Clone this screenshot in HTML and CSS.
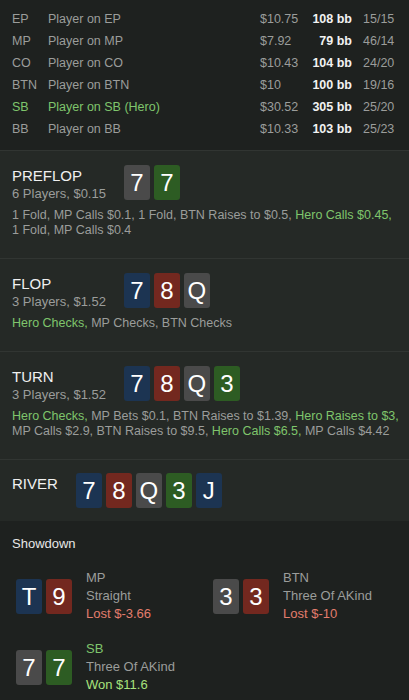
FILE: index.html
```html
<!DOCTYPE html>
<html>
<head>
<meta charset="utf-8">
<link rel="stylesheet" href="styles.css">
</head>
<body>
<div class="page">
  <div class="players">
    <div class="prow"><span class="pos">EP</span><span class="name">Player on EP</span><span class="money">$10.75</span><span class="bb">108 bb</span><span class="stats">15/15</span></div>
    <div class="prow"><span class="pos">MP</span><span class="name">Player on MP</span><span class="money">$7.92</span><span class="bb">79 bb</span><span class="stats">46/14</span></div>
    <div class="prow"><span class="pos">CO</span><span class="name">Player on CO</span><span class="money">$10.43</span><span class="bb">104 bb</span><span class="stats">24/20</span></div>
    <div class="prow"><span class="pos">BTN</span><span class="name">Player on BTN</span><span class="money">$10</span><span class="bb">100 bb</span><span class="stats">19/16</span></div>
    <div class="prow hero"><span class="pos">SB</span><span class="name">Player on SB (Hero)</span><span class="money">$30.52</span><span class="bb">305 bb</span><span class="stats">25/20</span></div>
    <div class="prow"><span class="pos">BB</span><span class="name">Player on BB</span><span class="money">$10.33</span><span class="bb">103 bb</span><span class="stats">25/23</span></div>
  </div>

  <div class="street">
    <div class="shead">
      <div class="stitle"><div class="sname">PREFLOP</div><div class="ssub">6 Players, $0.15</div></div>
      <div class="cards"><span class="card gray">7</span><span class="card green">7</span></div>
    </div>
    <div class="actions">1&nbsp;Fold, MP Calls $0.1, 1&nbsp;Fold, BTN Raises to $0.5, <span class="hero-act">Hero Calls $0.45,</span> 1&nbsp;Fold, MP Calls $0.4</div>
  </div>

  <div class="street">
    <div class="shead">
      <div class="stitle"><div class="sname">FLOP</div><div class="ssub">3 Players, $1.52</div></div>
      <div class="cards"><span class="card blue">7</span><span class="card red">8</span><span class="card gray">Q</span></div>
    </div>
    <div class="actions"><span class="hero-act">Hero Checks,</span> MP Checks, BTN Checks</div>
  </div>

  <div class="street">
    <div class="shead">
      <div class="stitle"><div class="sname">TURN</div><div class="ssub">3 Players, $1.52</div></div>
      <div class="cards"><span class="card blue">7</span><span class="card red">8</span><span class="card gray">Q</span><span class="card green">3</span></div>
    </div>
    <div class="actions"><span class="hero-act">Hero Checks,</span> MP Bets $0.1, BTN Raises to $1.39, <span class="hero-act">Hero Raises to $3,</span> MP Calls $2.9, BTN Raises to $9.5, <span class="hero-act">Hero Calls $6.5,</span> MP Calls $4.42</div>
  </div>

  <div class="street river">
    <div class="shead">
      <div class="stitle"><div class="sname">RIVER</div></div>
      <div class="cards"><span class="card blue">7</span><span class="card red">8</span><span class="card gray">Q</span><span class="card green">3</span><span class="card blue">J</span></div>
    </div>
  </div>

  <div class="showdown">
    <div class="sd-title">Showdown</div>
    <div class="sd-grid">
      <div class="sd-player">
        <div class="cards"><span class="card blue">T</span><span class="card red">9</span></div>
        <div class="sd-info"><div class="sd-pos">MP</div><div class="sd-hand">Straight</div><div class="lost">Lost $-3.66</div></div>
      </div>
      <div class="sd-player">
        <div class="cards"><span class="card gray">3</span><span class="card red">3</span></div>
        <div class="sd-info"><div class="sd-pos">BTN</div><div class="sd-hand">Three Of AKind</div><div class="lost">Lost $-10</div></div>
      </div>
      <div class="sd-player">
        <div class="cards"><span class="card gray">7</span><span class="card green">7</span></div>
        <div class="sd-info"><div class="sd-pos hero-pos">SB</div><div class="sd-hand">Three Of AKind</div><div class="won">Won $11.6</div></div>
      </div>
    </div>
  </div>
</div>
</body>
</html>
```

FILE: styles.css
```css
* { box-sizing: border-box; }
html, body { margin: 0; padding: 0; background: #1e211f; }
body { font-family: "Liberation Sans", Arial, sans-serif; font-size: 12.5px; color: #9b9d9b; }
.page { width: 409px; }

.players { padding: 8px 12px 10px 12px; background: #1e211f; }
.prow { display: grid; grid-template-columns: 36px 1fr 46px 46px 45px; height: 22px; align-items: center; white-space: nowrap; font-size: 12.5px; }
.prow .bb { text-align: right; color: #f2f2f2; font-weight: bold; }
.prow .stats { padding-left: 11px; }
.prow.hero .pos, .prow.hero .name { color: #7fc56c; }

.street { background: #252926; border-top: 1px solid #313532; padding: 14px 4px 20px 12px; }
.shead { display: flex; align-items: flex-start; gap: 18px; }
.stitle { padding-top: 2px; }
.sname { font-size: 15px; color: #f0f0f0; line-height: 18px; }
.ssub { font-size: 13px; line-height: 17px; color: #9b9d9b; }
.cards { display: flex; gap: 4px; }
.card { width: 26px; height: 35px; border-radius: 3px; color: #fff; font-size: 24px; line-height: 35px; text-align: center; display: block; }
.card.gray { background: #4a4a4a; }
.card.green { background: #2d5c23; }
.card.blue { background: #1c3452; }
.card.red { background: #73281f; }
.actions { margin-top: 6px; line-height: 15px; color: #9b9d9b; font-size: 12.5px; }
.hero-act { color: #7fc56c; }
.river { padding: 13px 12px 13px 12px; }

.showdown { background: #1e211f; padding: 14px 12px 16px 12px; }
.sd-title { color: #e8e8e8; font-size: 13px; line-height: 17px; }
.sd-grid { display: grid; grid-template-columns: 197px 197px; row-gap: 17px; padding: 17px 0 0 4px; }
.sd-player { display: flex; align-items: center; gap: 14px; }
.sd-info { line-height: 18px; font-size: 13px; }
.sd-pos, .sd-hand { color: #9b9d9b; }
.hero-pos { color: #7fc56c; }
.lost { color: #e37d6d; }
.won { color: #a8e27c; }
```
